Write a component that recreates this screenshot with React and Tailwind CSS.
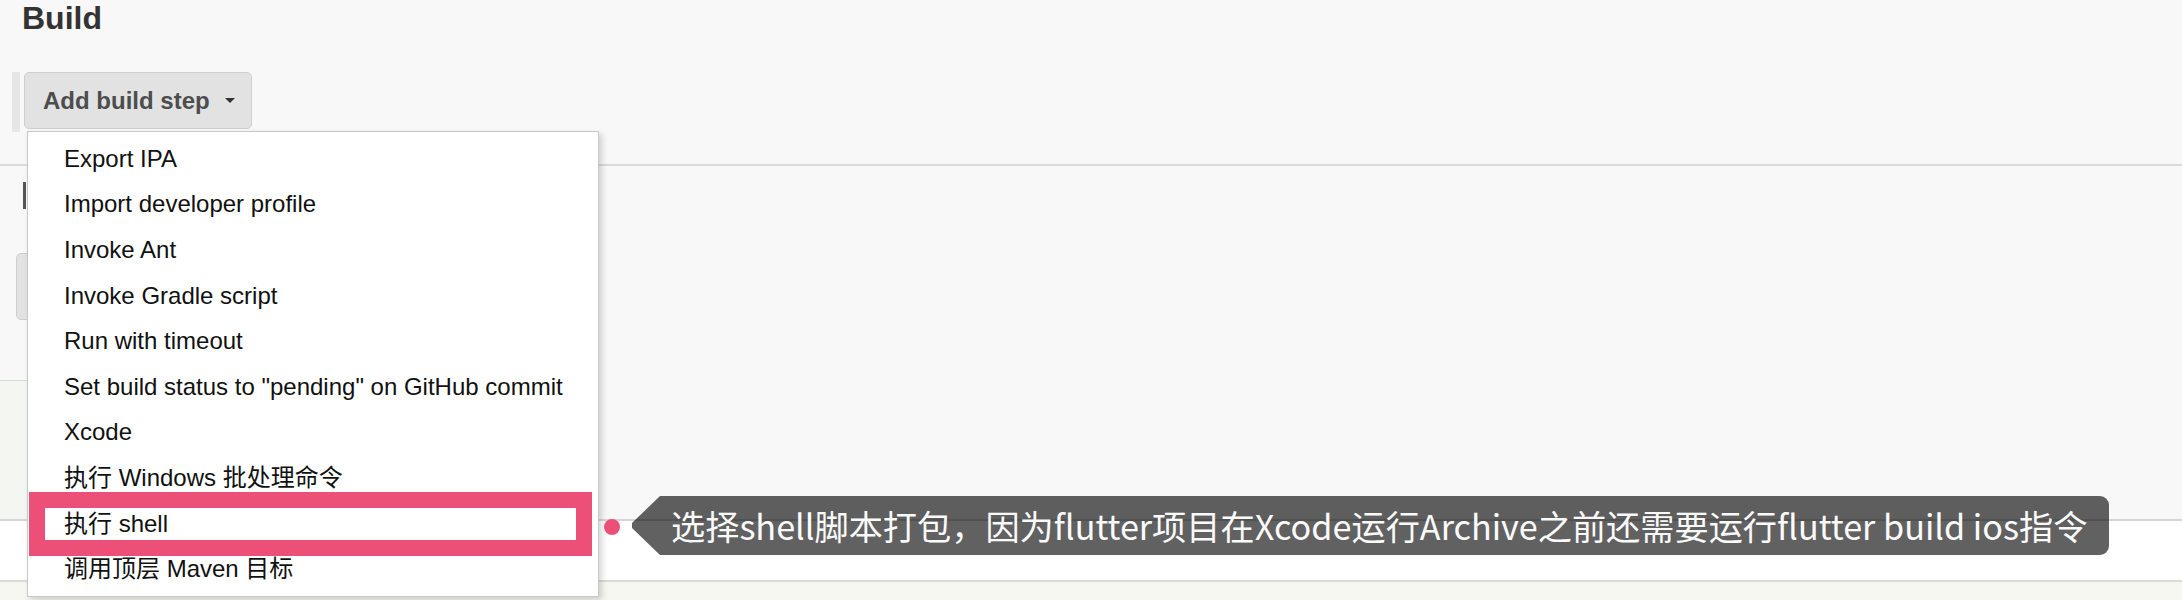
import React from "react";

const menuItems = [
  "Export IPA",
  "Import developer profile",
  "Invoke Ant",
  "Invoke Gradle script",
  "Run with timeout",
  'Set build status to "pending" on GitHub commit',
  "Xcode",
  "执行 Windows 批处理命令",
  "执行 shell",
  "调用顶层 Maven 目标",
];

// Botón gris de Jenkins con la barra lateral a la izquierda
function StepButton({ label, barHeight = "h-[60px]", btnHeight = "h-[57px]" }) {
  return (
    <div className="flex items-start gap-[4px] pl-[12px]">
      <div className={`w-[8px] ${barHeight} bg-[#e6e6e6]`} />
      <button
        className={`${btnHeight} flex items-center rounded-[5px] border border-[#cfcfcf] bg-[#e2e2e2] pl-[18px] pr-[16px] text-[24px] font-bold text-[#4d4d4d]`}
      >
        {label && <span className="leading-none whitespace-nowrap">{label}</span>}
        <svg width="10" height="5" viewBox="0 0 10 5" className="ml-[15px]">
          <polygon points="0,0 10,0 5,5" fill="#333" />
        </svg>
      </button>
    </div>
  );
}

export default function App() {
  return (
    <div className="relative w-full h-[600px] overflow-hidden bg-white font-['Liberation_Sans','Noto_Sans_CJK_SC',sans-serif]">
      {/* Sección Build */}
      <div className="h-[164px] bg-[#f8f8f8]">
        <h2 className="pl-[22px] text-[32px] leading-[36px] font-bold text-[#333]">
          Build
        </h2>
        <div className="mt-[36px]">
          <StepButton label="Add build step" />
        </div>
      </div>

      {/* Sección Post-build (casi toda tapada por el menú) */}
      <div className="h-[355px] border-t-2 border-[#dadada] bg-[#f8f8f8] flex flex-col">
        <div className="mt-[16px] ml-[23px] w-[3px] h-[27px] bg-[#555]" />
        <div className="mt-[44px] w-[27px] overflow-hidden">
          <StepButton label="" barHeight="h-[70px]" btnHeight="h-[67px]" />
        </div>
        <div className="mt-auto h-[139px] w-[560px] border-t border-[#d3e0cc] bg-[#f4f7f1]" />
      </div>

      <div className="h-[61px] border-t-2 border-[#d6d6d6] bg-white" />
      <div className="h-[20px] border-t-2 border-[#dadada] bg-[#f5f7f0]" />

      {/* Menú desplegable */}
      <div className="absolute left-[27px] top-[131px] w-[572px] h-[466px] border border-[#c8c8c8] bg-white py-[4px] shadow-[3px_3px_6px_rgba(0,0,0,0.16)]">
        {menuItems.map((item) => (
          <div
            key={item}
            className="h-[45.6px] flex items-center pl-[36px] text-[24px] leading-none text-[#111] whitespace-nowrap"
          >
            {item}
          </div>
        ))}
      </div>

      {/* Marco rosa de anotación */}
      <div className="absolute left-[29px] top-[492px] w-[563px] h-[64px] border-[16px] border-[#ec5079]" />

      {/* Punto + globo de anotación */}
      <div className="absolute left-[604px] top-[519px] w-[16px] h-[16px] rounded-full bg-[#ec5079]" />
      <div className="absolute left-[628px] top-[496px] flex h-[59px]">
        <svg width="32" height="59" viewBox="0 0 32 59" className="block">
          <polygon points="32,0 4,27 4,32 32,59" fill="rgba(0,0,0,0.62)" />
        </svg>
        <div className="w-[1449px] h-[59px] flex items-center rounded-r-[9px] bg-black/[0.62] pl-[11px] font-['Noto_Sans_CJK_SC',sans-serif] text-[34.2px] leading-none text-[#fafafa] whitespace-nowrap">
          选择shell脚本打包，因为flutter项目在Xcode运行Archive之前还需要运行flutter build ios指令
        </div>
      </div>
    </div>
  );
}
